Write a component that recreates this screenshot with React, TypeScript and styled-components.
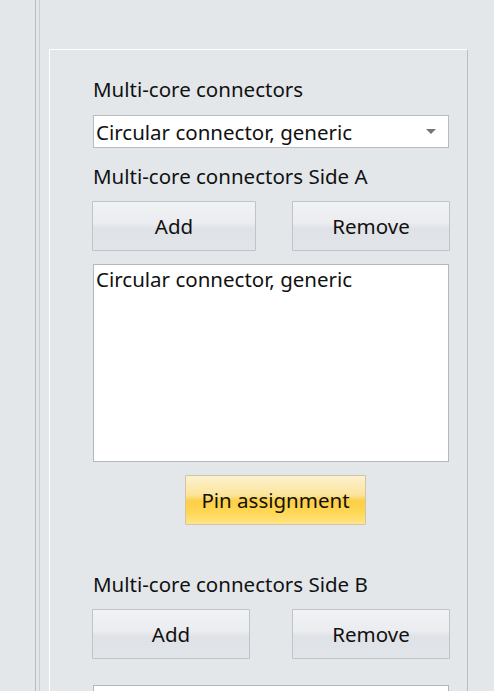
import styled, { createGlobalStyle } from "styled-components";

const GlobalStyle = createGlobalStyle`
  html, body {
    margin: 0;
    padding: 0;
    background: #e3e7ea;
    height: 100%;
    overflow: hidden;
  }
  #root {
    height: 100%;
  }
`;

const Page = styled.div`
  display: flex;
  height: 691px;
  padding-left: 35px;
  overflow: hidden;
  font-family: "Noto Sans", "Open Sans", sans-serif;
  color: #111;
`;

const Rail = styled.div`
  width: 3px;
  border-left: 1px solid #b7bbc0;
  border-right: 1px solid #c9cdd1;
  flex-shrink: 0;
`;

const Panel = styled.div`
  margin-left: 9px;
  margin-top: 49px;
  width: 419px;
  box-sizing: border-box;
  border-top: 1px solid #ffffff;
  border-left: 1px solid #ffffff;
  border-right: 1px solid #b9bdc2;
  padding: 27px 0 0 43px;
  display: flex;
  flex-direction: column;
  overflow: hidden;

  & > * {
    flex-shrink: 0;
  }
`;

const Label = styled.div<{ $top: number }>`
  margin-top: ${(p) => p.$top}px;
  font-size: 20.5px;
  line-height: 24px;
  height: 24px;
  white-space: nowrap;
`;

const Select = styled.div`
  margin-top: 14px;
  width: 356px;
  height: 33px;
  box-sizing: border-box;
  background: #ffffff;
  border: 1px solid #b8bcc2;
  display: flex;
  align-items: center;
  justify-content: space-between;
  padding: 0 12px 0 2px;
  font-size: 20.5px;
  white-space: nowrap;
`;

const Arrow = styled.span`
  width: 0;
  height: 0;
  border-left: 5px solid transparent;
  border-right: 5px solid transparent;
  border-top: 5px solid #737678;
`;

const ButtonRow = styled.div<{ $gap: number }>`
  margin-top: 13px;
  margin-left: -1px;
  display: flex;
  gap: ${(p) => p.$gap}px;
`;

const Button = styled.div<{ $width: number }>`
  width: ${(p) => p.$width}px;
  height: 50px;
  box-sizing: border-box;
  border: 1px solid #c0c4ca;
  border-radius: 1px;
  background: linear-gradient(
    to bottom,
    #f0f2f4 0%,
    #eaecef 45%,
    #dfe2e7 55%,
    #e1e4e8 100%
  );
  display: flex;
  align-items: center;
  justify-content: center;
  font-size: 20.5px;
`;

const PinButton = styled(Button)`
  margin-top: 13px;
  margin-left: 92px;
  border-color: #cfc6a6;
  background: linear-gradient(
    to bottom,
    #fcf1cf 0%,
    #fbe49a 40%,
    #fdcf45 52%,
    #ffd95a 80%,
    #ffe48a 100%
  );
`;

const ListBox = styled.div<{ $top: number; $height: number }>`
  margin-top: ${(p) => p.$top}px;
  width: 356px;
  height: ${(p) => p.$height}px;
  box-sizing: border-box;
  background: #ffffff;
  border: 1px solid #b3b8be;
  padding: 1px 2px;
  font-size: 20.5px;
  line-height: 26px;
  white-space: nowrap;
`;

export default function App() {
  return (
    <>
      <GlobalStyle />
      <Page>
        <Rail />
        <Panel>
          <Label $top={0}>Multi-core connectors</Label>
          <Select>
            <span>Circular connector, generic</span>
            <Arrow />
          </Select>
          <Label $top={16}>Multi-core connectors Side A</Label>
          <ButtonRow $gap={36}>
            <Button $width={164}>Add</Button>
            <Button $width={158}>Remove</Button>
          </ButtonRow>
          <ListBox $top={13} $height={198}>
            Circular connector, generic
          </ListBox>
          <PinButton $width={181}>Pin assignment</PinButton>
          <Label $top={47}>Multi-core connectors Side B</Label>
          <ButtonRow $gap={42}>
            <Button $width={158}>Add</Button>
            <Button $width={158}>Remove</Button>
          </ButtonRow>
          <ListBox $top={26} $height={120}>
            &nbsp;
          </ListBox>
        </Panel>
      </Page>
    </>
  );
}
